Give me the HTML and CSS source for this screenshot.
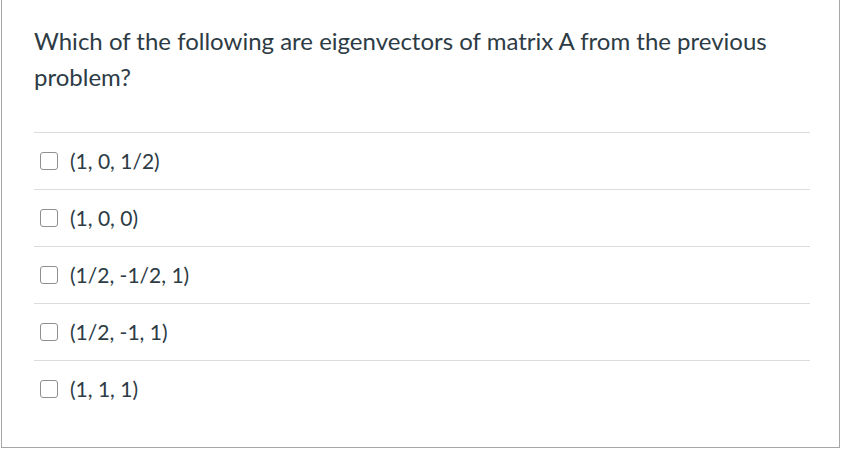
FILE: index.html
```html
<!DOCTYPE html>
<html>
<head>
<meta charset="utf-8">
<link rel="stylesheet" href="styles.css">
</head>
<body>
<div class="frame">
  <div class="question">Which of the following are eigenvectors of matrix A from the previous problem?</div>
  <div class="answers">
    <label class="answer"><span class="box"></span><span class="label">(1, 0, 1/2)</span></label>
    <label class="answer"><span class="box"></span><span class="label">(1, 0, 0)</span></label>
    <label class="answer"><span class="box"></span><span class="label">(1/2, -1/2, 1)</span></label>
    <label class="answer"><span class="box"></span><span class="label">(1/2, -1, 1)</span></label>
    <label class="answer"><span class="box"></span><span class="label">(1, 1, 1)</span></label>
  </div>
</div>
</body>
</html>
```

FILE: styles.css
```css
html, body {
  margin: 0;
  padding: 0;
  background: #ffffff;
}
body {
  font-family: Lato, "Noto Sans", sans-serif;
  color: #2d3b45;
}
.frame {
  box-sizing: border-box;
  margin-left: 1px;
  width: 839px;
  height: 448px;
  border: 1px solid #a6a6a6;
  border-top: none;
  padding: 23px 29px 0 32px;
}
.question {
  font-size: 24px;
  line-height: 36px;
  padding-right: 20px;
}
.answers {
  margin-top: 37px;
}
.answer {
  display: flex;
  align-items: center;
  height: 56px;
  border-top: 1px solid #dcdcdc;
  font-size: 21px;
}
.box {
  box-sizing: border-box;
  width: 18px;
  height: 18px;
  border: 1.5px solid #8f8f8f;
  border-radius: 3px;
  margin-left: 6px;
  margin-right: 12px;
}
.label {
  line-height: 24px;
}
```
